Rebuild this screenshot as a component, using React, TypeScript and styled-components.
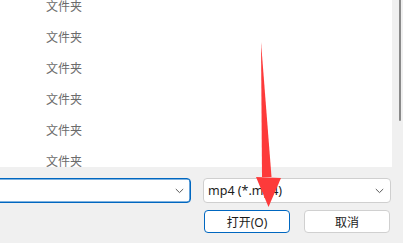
import styled, { createGlobalStyle } from 'styled-components'

const GlobalStyle = createGlobalStyle`
    html, body {
        margin: 0;
        padding: 0;
        background: #f0f0f0;
    }
    body {
        font-family: "Noto Sans", "Noto Sans CJK SC", sans-serif;
    }
`

const Window = styled.div`
    position: relative;
    width: 403px;
    height: 243px;
    overflow: hidden;
    background: #f0f0f0;
    display: flex;
    flex-direction: column;
`

const ListArea = styled.div`
    display: flex;
    height: 167px;
    flex-shrink: 0;
`

const List = styled.ul`
    flex: 1;
    margin: 0;
    padding: 0;
    list-style: none;
    background: #fff;
    overflow: hidden;
`

const Row = styled.li`
    height: 31px;
    line-height: 31px;
    padding-left: 46px;
    font-family: "Noto Sans CJK SC", sans-serif;
    font-size: 12px;
    color: #6b6b6b;
    &:first-child {
        margin-top: -10px;
    }
`

const ScrollTrack = styled.div`
    width: 11px;
    background: #f0f0f0;
    display: flex;
    justify-content: flex-end;
    padding-right: 2px;
    box-sizing: border-box;
`

const ScrollThumb = styled.div`
    width: 2px;
    height: 121px;
    background: #8a8a8a;
    border-radius: 0 0 1px 1px;
`

const Footer = styled.div`
    display: flex;
    flex-direction: column;
    gap: 7px;
    padding: 11px 12px 0 0;
`

const FieldRow = styled.div`
    display: flex;
    gap: 12px;
`

const Combo = styled.div<{ $focused?: boolean; $width: number }>`
    box-sizing: border-box;
    width: ${({ $width }) => $width}px;
    height: 25px;
    display: flex;
    align-items: center;
    justify-content: space-between;
    padding: 0 6px 0 4px;
    background: #fff;
    border: 1px solid ${({ $focused }) => ($focused ? '#0067c0' : '#cfcfcf')};
    box-shadow: ${({ $focused }) => ($focused ? 'inset 0 0 0 0.6px #0067c0' : 'none')};
    border-radius: 4px;
    font-size: 12.5px;
    color: #1a1a1a;
    &:first-child {
        margin-left: -10px;
    }
`

const Chevron = () => (
    <svg width="9" height="6" viewBox="0 0 9 6">
        <path d="M0.8 1 L4.5 4.6 L8.2 1" fill="none" stroke="#5a5a5a" strokeWidth="1" />
    </svg>
)

const ButtonRow = styled.div`
    display: flex;
    justify-content: flex-end;
    gap: 14px;
    padding-right: 1px;
`

const Button = styled.button<{ $primary?: boolean }>`
    box-sizing: border-box;
    width: 86px;
    height: 23px;
    padding: 0;
    background: #fff;
    border: 1px solid ${({ $primary }) => ($primary ? '#0067c0' : '#d0d0d0')};
    border-radius: 4px;
    font-family: "Noto Sans", "Noto Sans CJK SC", sans-serif;
    font-size: 12px;
    color: #1a1a1a;
`

const Arrow = styled.svg`
    position: absolute;
    left: 0;
    top: 0;
    pointer-events: none;
`

const rows = Array.from({ length: 6 }, (_, i) => i)

export default function App() {
    return (
        <>
            <GlobalStyle />
            <Window>
                <ListArea>
                    <List>
                        {rows.map((i) => (
                            <Row key={i}>文件夹</Row>
                        ))}
                    </List>
                    <ScrollTrack>
                        <ScrollThumb />
                    </ScrollTrack>
                </ListArea>
                <Footer>
                    <FieldRow>
                        <Combo $focused $width={201}>
                            <span />
                            <Chevron />
                        </Combo>
                        <Combo $width={188}>
                            <span>mp4 (*.mp4)</span>
                            <Chevron />
                        </Combo>
                    </FieldRow>
                    <ButtonRow>
                        <Button $primary>打开(O)</Button>
                        <Button>取消</Button>
                    </ButtonRow>
                </Footer>
                <Arrow width="403" height="243" viewBox="0 0 403 243">
                    <polygon points="261,42 271.5,177 262,177" fill="#fd3a3a" />
                    <polygon points="256,177 281,178 268.5,207" fill="#fd3a3a" />
                </Arrow>
            </Window>
        </>
    )
}
